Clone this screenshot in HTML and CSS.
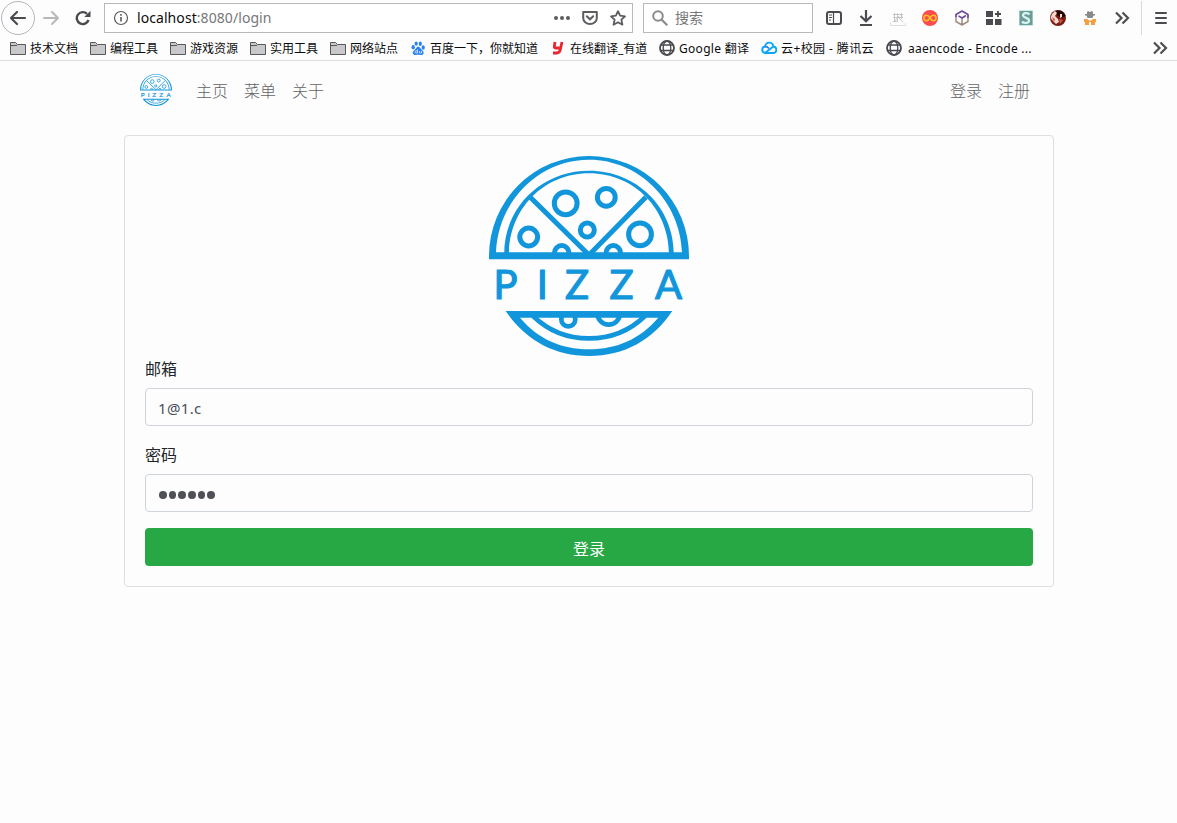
FILE: index.html
```html
<!DOCTYPE html>
<html lang="zh-CN">
<head>
<meta charset="utf-8">
<title>登录</title>
<link rel="stylesheet" href="styles.css">
</head>
<body>
<svg class="defs" width="0" height="0" aria-hidden="true">
  <defs>
    <clipPath id="top-half"><rect x="-5" y="-5" width="210" height="104"/></clipPath>
    <clipPath id="bottom-half"><rect x="-5" y="158" width="210" height="50"/></clipPath>
    <symbol id="pizza" viewBox="0 0 200 200">
      <g fill="none" stroke="#1296db" stroke-width="4.700">
        <path fill="#1296db" stroke="none" fill-rule="evenodd" d="M0 103.300V100A100 100 0 0 1 200 100V103.300ZM7 96.300H193C191 45 150 3.800 100 3.800S9 45 7 96.300Z"/>
        <path fill="#1296db" stroke="none" fill-rule="evenodd" d="M15.200 98C15 52 52 14.800 100 14.800S185 52 184.800 98H180C180 54 146 17.300 100 17.300S20 54 20 98Z"/>
        <path stroke-width="5" d="M41 41L100 99L157 41"/>
        <g clip-path="url(#top-half)" stroke-width="5">
          <circle cx="76.700" cy="47.300" r="11.400"/><circle cx="117.300" cy="41.300" r="8.900"/>
          <circle cx="98.300" cy="74" r="7"/><circle cx="39.700" cy="81" r="8.900"/>
          <circle cx="151" cy="78.300" r="11.400"/><circle cx="72.700" cy="96.800" r="7.200"/><circle cx="124.300" cy="96.800" r="7.200"/>
        </g>
        <path fill="#1296db" stroke="none" fill-rule="evenodd" d="M16.700 155H183.300C164 184 135 200 100 200S36 184 16.700 155ZM31 161.700C49 183 72 193.200 100 193.200S151 183 169.300 161.700Z"/>
        <path d="M44 160C60 175.500 78 182.400 100 182.400S140 175.500 156 160"/>
        <g clip-path="url(#bottom-half)"><circle cx="79.300" cy="163.400" r="7"/><circle cx="119.700" cy="157.500" r="11.200"/></g>
      </g>
      <text class="logo-word" y="143" x="4.500 47.800 76 120.500 166">PIZZA</text>
    </symbol>
    <symbol id="folder" viewBox="0 0 16 16"><path fill="#c9c9cb" stroke="#58585a" d="M.5 14.500V2.500H5.500L7.500 4.500H15.500V14.500Z"/><path stroke="#58585a" d="M1 5.500H7"/></symbol>
    <symbol id="globe" viewBox="0 0 16 16"><g fill="none" stroke="#4a4a4f" stroke-width="1.300"><circle cx="8" cy="8" r="7" stroke-width="1.800"/><ellipse cx="8" cy="8" rx="3.800" ry="7"/><path d="M2 5H14M1 10.500H15"/></g></symbol>
    <symbol id="chevrons" viewBox="0 0 16 16"><path fill="none" stroke="#4f4f52" stroke-width="2.200" d="M2 2.500L7.500 8L2 13.500M8.500 2.500L14 8L8.500 13.500"/></symbol>
  </defs>
</svg>
<header class="browser">
  <div class="toolbar">
    <div class="nav-buttons">
      <span class="back"><svg width="20" height="20" viewBox="0 0 20 20"><path fill="none" stroke="#4a4a4f" stroke-width="2.200" stroke-linecap="round" stroke-linejoin="round" d="M17 10H3M9 4L3 10L9 16"/></svg></span>
      <svg class="forward" width="18" height="18" viewBox="0 0 18 18"><path fill="none" stroke="#b8b8ba" stroke-width="2" stroke-linecap="round" stroke-linejoin="round" d="M2 9H16M10 3L16 9L10 15"/></svg>
      <svg class="reload" width="16" height="16" viewBox="0 0 16 16"><path fill="none" stroke="#4a4a4f" stroke-width="2.400" d="M13.500 10A6 6 0 1 1 12 3.800"/><path fill="#4a4a4f" d="M15.500 .8V7H9.300Z"/></svg>
    </div>
    <div class="urlbar">
      <svg width="16" height="16" viewBox="0 0 16 16"><circle cx="8" cy="8" r="6.500" fill="none" stroke="#5b5b5f" stroke-width="1.200"/><path stroke="#5b5b5f" stroke-width="1.600" d="M8 7V11.500M8 4V5.700"/></svg>
      <span class="url">localhost<span class="dim">:8080/login</span></span>
      <div class="url-actions">
        <svg width="16" height="16" viewBox="0 0 16 16" fill="#5d5d61"><circle cx="2" cy="8" r="2"/><circle cx="8" cy="8" r="2"/><circle cx="14" cy="8" r="2"/></svg>
        <svg width="16" height="16" viewBox="0 0 16 16"><path fill="none" stroke="#5d5d61" stroke-width="2" stroke-linejoin="round" d="M1.200 2H14.800V8A6.800 6 0 0 1 1.200 8Z"/><path fill="none" stroke="#5d5d61" stroke-width="2" stroke-linecap="round" d="M4.800 6.200L8 9.300L11.200 6.200"/></svg>
        <svg width="16" height="16" viewBox="0 0 16 16"><path fill="none" stroke="#5d5d61" stroke-width="1.800" stroke-linejoin="round" d="M8 1.200L10.100 5.700L15 6.300L11.400 9.700L12.400 14.700L8 12.200L3.600 14.700L4.600 9.700L1 6.300L5.900 5.700Z"/></svg>
      </div>
    </div>
    <div class="searchbar">
      <svg width="16" height="16" viewBox="0 0 16 16"><circle cx="6" cy="6" r="4.800" fill="none" stroke="#8b8b8e" stroke-width="2"/><path stroke="#8b8b8e" stroke-width="2.200" d="M9.500 9.500L15.300 15.300"/></svg>
      <span>搜索</span>
    </div>
    <div class="extensions">
      <span><svg width="16" height="16" viewBox="0 0 16 16"><rect x="1" y="2" width="14" height="12" rx="2" fill="none" stroke="#4a4a4f" stroke-width="2"/><path stroke="#4a4a4f" stroke-width="1.200" d="M7.500 2V14M3 5H6M3 7.500H6M3 10H5"/></svg></span>
      <span><svg width="16" height="16" viewBox="0 0 16 16"><path fill="none" stroke="#4a4a4f" stroke-width="2.200" d="M8 0V11M2.500 6L8 11.300L13.500 6M2 15H14"/></svg></span>
      <span><svg width="16" height="16" viewBox="0 0 16 16"><path fill="none" stroke="#bdbdc1" stroke-width=".8" d="M3 4.500H13M3 7.500H12M3 11.500H8M4.500 3V12M7.500 3V11M11.500 3V9M4 12L9 6M8 7L13 12M10 4L13 8"/><path fill="none" stroke="#dededf" d="M.5 12V15.500H15.500V13"/></svg></span>
      <span><svg width="16" height="16" viewBox="0 0 16 16"><circle cx="8" cy="8" r="8" fill="#fa4b50"/><path fill="none" stroke="#ffc51f" stroke-width="1.500" d="M8 8C6.500 5.500 5.500 5.300 4.600 5.300A2.700 2.700 0 0 0 4.600 10.700C5.500 10.700 6.500 10.500 8 8C9.500 5.500 10.500 5.300 11.400 5.300A2.700 2.700 0 0 1 11.400 10.700C10.500 10.700 9.500 10.500 8 8Z"/></svg></span>
      <span><svg width="16" height="16" viewBox="0 0 16 16"><g fill="none" stroke-width="1.500" stroke-linejoin="round"><path stroke="#a18c82" d="M2 4.500V11.500L8 15L14 11.500V4.500M8 8V15"/><path stroke="#68489b" d="M2 7V4.500L8 1L14 4.500V8M4.500 5.800L8 8L12 5.500"/></g></svg></span>
      <span><svg width="16" height="16" viewBox="0 0 16 16"><path fill="#4a4a4f" d="M0 1H7V7H0ZM0 9H7V15H0ZM9 9H15.500V15H9Z"/><path stroke="#4a4a4f" stroke-width="1.800" d="M12 1V7M9 4H15"/></svg></span>
      <span><svg width="16" height="16" viewBox="0 0 16 16"><rect x="1" width="14" height="16" fill="#c1eee9"/><path fill="#719b97" d="M1.500 1H14.500V15H1.500Z"/><path fill="none" stroke="#d5f7f3" stroke-width="2.200" d="M11.500 4.500C10 2.500 4.500 2.700 5 5.500S11 7.500 11 10.500S5.500 13.500 4 11.500"/></svg></span>
      <span><svg width="16" height="16" viewBox="0 0 16 16"><circle cx="8" cy="8" r="8" fill="#7b1c18"/><path fill="#210807" d="M5 2C8-1 14 1 15.500 6L12 8L8 6Z"/><path fill="#f9d9cb" d="M.5 8L2 4L5 1L7 3L5 6L8 9L9 12L6 14L3 11ZM10 4L12 4L12 7L10 8Z"/><path fill="#c75a43" d="M2 7L5 9L4 12ZM9 9L13 10L10 14Z"/></svg></span>
      <span><svg width="16" height="16" viewBox="0 0 16 16"><path fill="#88898b" d="M5 2L6 1L8 2L10 1L11 2V4H13V5.500H11.500L10.500 8H5.500L4.500 5.500H3V4H5Z"/><path fill="#f89e3e" d="M2 9H5L8 11L11 9H14V12H13V15H9V12H7V15H3V12H2Z"/></svg></span>
      <span><svg width="16" height="16"><use href="#chevrons"/></svg></span>
    </div>
    <div class="menu"><svg width="16" height="16" viewBox="0 0 16 16"><path stroke="#4a4a4f" stroke-width="2" stroke-linecap="round" d="M3 3H13M3 8H13M3 13H13"/></svg></div>
  </div>
  <div class="bookmarks">
    <span><svg width="16" height="16"><use href="#folder"/></svg><b>技术文档</b></span>
    <span><svg width="16" height="16"><use href="#folder"/></svg><b>编程工具</b></span>
    <span><svg width="16" height="16"><use href="#folder"/></svg><b>游戏资源</b></span>
    <span><svg width="16" height="16"><use href="#folder"/></svg><b>实用工具</b></span>
    <span><svg width="16" height="16"><use href="#folder"/></svg><b>网络站点</b></span>
    <span><svg width="16" height="16" viewBox="0 0 16 16"><g fill="#2d83ee"><ellipse cx="3.200" cy="7.300" rx="1.700" ry="2.200"/><ellipse cx="6.200" cy="3.600" rx="1.600" ry="2.200"/><ellipse cx="10.300" cy="3.700" rx="1.600" ry="2.200"/><ellipse cx="13.200" cy="7.500" rx="1.600" ry="2.200"/><path d="M8.200 6.500C10 6.500 10.500 9 12.500 10.500C15 13 13 15.500 10.500 15C9 14.700 7.500 14.700 6 15C3 15.500 1.500 12.500 4 10.500C6 9 6.400 6.500 8.200 6.500Z"/></g><path fill="none" stroke="#d8e9ff" stroke-width=".8" d="M7.500 9.500V13H6A1 1 0 0 1 6 11H7.500M9.500 11V13H11.500V11"/></svg><b>百度一下，你就知道</b></span>
    <span><svg width="16" height="16" viewBox="0 0 16 16"><path fill="none" stroke="#e8252d" stroke-width="2.800" d="M5 2L4.300 6.500Q4.100 8 6 8H9.300M12 2L10.200 10Q9.500 13 6.800 13H3"/></svg><b>在线翻译_有道</b></span>
    <span><svg width="16" height="16"><use href="#globe"/></svg><b class="latin">Google 翻译</b></span>
    <span><svg width="16" height="16" viewBox="0 0 16 16"><path fill="none" stroke="#0aa7f5" stroke-width="1.900" stroke-linejoin="round" d="M4 13H12A3 3 0 0 0 12.500 6.800C12 1.500 5 1 4 6.500A3.300 3.300 0 0 0 4 13L12.300 6.500"/><path fill="none" stroke="#1a7df3" stroke-width="1.700" d="M4 6.700Q6.500 6.700 8 8.500"/></svg><b class="tencent">云+校园 - 腾讯云</b></span>
    <span class="wide-gap"><svg width="16" height="16"><use href="#globe"/></svg><b class="encode">aaencode - Encode ...</b></span>
    <svg class="overflow" width="16" height="16"><use href="#chevrons"/></svg>
  </div>
</header>
<nav class="site-nav">
  <svg class="brand" width="32" height="32"><use href="#pizza"/></svg>
  <a>主页</a><a>菜单</a><a>关于</a>
  <div class="account"><a>登录</a><a>注册</a></div>
</nav>
<main class="card">
  <svg class="hero" width="200" height="200"><use href="#pizza"/></svg>
  <form>
    <label for="email">邮箱</label>
    <input id="email" type="text" value="1@1.c">
    <label>密码</label>
    <div class="password"><i></i><i></i><i></i><i></i><i></i><i></i></div>
    <button type="button">登录</button>
  </form>
</main>
</body>
</html>
```
FILE: styles.css
```css
* { box-sizing: border-box; }
body { margin: 0; background: #fdfdfe; color: #212529; font: 16px/24px "Noto Sans", "Noto Sans CJK SC", sans-serif; height: 823px; overflow: hidden; }
svg { display: block; flex: none; }
.defs { position: absolute; }
.browser { height: 61px; border-bottom: 1px solid #dedede; color: #0c0c0d; }
.toolbar { display: flex; height: 36px; padding-top: 1px; align-items: flex-start; }
.nav-buttons { display: flex; width: 104px; height: 34px; align-items: center; padding-left: 1px; }
.back { display: flex; width: 34px; height: 34px; border: 1px solid #b5b5b7; border-radius: 50%; align-items: center; justify-content: center; }
.forward { margin-left: 7px; }
.reload { margin-left: 15px; }
.urlbar, .searchbar { display: flex; height: 30px; margin-top: 2px; border: 1px solid #b9b9bb; align-items: center; background: #fff; }
.urlbar { width: 529px; padding: 0 6px 0 8px; }
.url { margin-left: 8px; font-size: 14px; letter-spacing: .07px; }
.dim { color: #77777a; }
.url-actions { display: flex; gap: 12px; margin-left: auto; }
.searchbar { width: 170px; margin-left: 10px; padding-left: 8px; gap: 7px; font-size: 14px; color: #77777a; }
.extensions { display: flex; margin-left: 5px; height: 34px; }
.extensions span { display: flex; width: 32px; align-items: center; justify-content: center; }
.menu { display: flex; width: 36px; height: 34px; margin-left: 3px; border-left: 1px solid #d8d8d9; align-items: center; padding-left: 11px; }
.bookmarks { display: grid; grid-template-columns: 80px 80px 80px 80px 80px 140px 109px 102px 125px 1fr 16px; height: 24px; padding: 0 9px 0 10px; align-items: center; font-size: 12px; line-height: 20px; white-space: nowrap; }
.bookmarks span { display: flex; align-items: center; gap: 4px; }
.bookmarks .wide-gap { gap: 6px; }
.bookmarks b { font-weight: 400; padding-top: 1px; }
.latin { letter-spacing: .3px; }
.tencent { letter-spacing: .4px; }
.encode { letter-spacing: .22px; }
.site-nav { display: flex; width: 930px; height: 61px; margin: 0 0 0 124px; padding: 0 24px 2px 16px; align-items: center; gap: 16px; color: #636365; font-weight: 300; }
.brand { margin-right: 8px; margin-top: -1px; }
.account { display: flex; gap: 16px; margin-left: auto; }
.card { width: 930px; height: 452px; margin: 13px 0 0 124px; padding: 20px; border: 1px solid #dedfe0; border-radius: 4px; }
.hero { margin: 0 auto; }
.logo-word { font: 40px Lato, sans-serif; fill: #1296db; stroke: #1296db; stroke-width: 1.2px; stroke-linejoin: round; }
label { display: block; height: 24px; margin-bottom: 8px; padding-top: 1px; }
input, .password { display: flex; width: 100%; height: 38px; margin-bottom: 16px; padding: 7px 12px 6px; border: 1px solid #ced4da; border-radius: 4px; background: #fdfdfe; color: #495057; }
input { font: 15px "Noto Sans", sans-serif; letter-spacing: .35px; }
.password { align-items: center; gap: 2px; padding: 9px 13px 6px; }
.password i { width: 7.700px; height: 8px; border-radius: 50%; background: #505157; }
button { display: block; width: 100%; height: 38px; border: 0; border-radius: 4px; background: #28a745; color: #fff; font: 16px/24px "Noto Sans", "Noto Sans CJK SC", sans-serif; padding: 3px 0 0; }
```
